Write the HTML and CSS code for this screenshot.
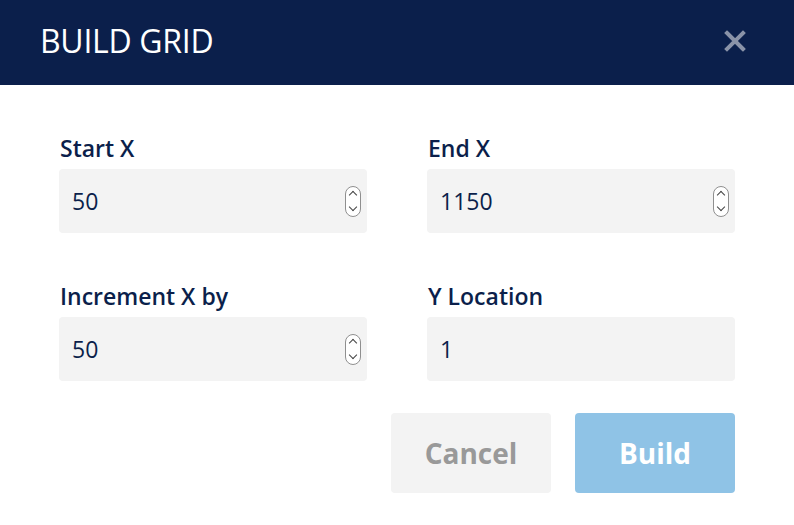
FILE: index.html
```html
<!DOCTYPE html>
<html lang="en">
<head>
<meta charset="UTF-8">
<meta name="viewport" content="width=device-width, initial-scale=1.0">
<title>Build Grid</title>
<link rel="stylesheet" href="styles.css">
</head>
<body>
<div class="modal">
  <header class="modal-header">
    <h1>BUILD GRID</h1>
    <button class="close" aria-label="Close">
      <svg width="22" height="22" viewBox="0 0 22 22"><path d="M3 3 L19 19 M19 3 L3 19" stroke="#8a93a8" stroke-width="4" stroke-linecap="square"/></svg>
    </button>
  </header>
  <div class="modal-body">
    <div class="fields">
      <div class="field">
        <label>Start X</label>
        <div class="input"><span>50</span><span class="spin"><i class="up"></i><i class="down"></i></span></div>
      </div>
      <div class="field">
        <label>End X</label>
        <div class="input"><span>1150</span><span class="spin"><i class="up"></i><i class="down"></i></span></div>
      </div>
      <div class="field">
        <label>Increment X by</label>
        <div class="input"><span>50</span><span class="spin"><i class="up"></i><i class="down"></i></span></div>
      </div>
      <div class="field">
        <label>Y Location</label>
        <div class="input"><span>1</span></div>
      </div>
    </div>
    <div class="actions">
      <button class="btn cancel">Cancel</button>
      <button class="btn build">Build</button>
    </div>
  </div>
</div>
</body>
</html>
```

FILE: styles.css
```css
body {margin: 0; font-family: "Open Sans", sans-serif; background: #fff;}
.modal {width: 794px; height: 525px; background: #fff;}

.modal-header {
  height: 85px;
  background-color: #0b1f4b;
  display: flex;
  align-items: center;
  justify-content: space-between;
  padding: 0 48px 4px 40px;
  box-sizing: border-box;
}
.modal-header h1 {
  margin: 0;
  color: #fff;
  font-weight: 400;
  font-size: 32px;
  letter-spacing: -0.3px;
}
.close {background: none; border: none; padding: 0; display: flex; cursor: pointer;}

.modal-body {padding: 48px 59px 0 59px;}
.fields {
  display: grid;
  grid-template-columns: 308px 308px;
  column-gap: 60px;
  row-gap: 48px;
}
.field label {
  display: block;
  color: #0b1f4b;
  font-weight: 600;
  font-size: 23px;
  line-height: 30px;
  margin: 0 0 6px 1px;
}
.input {
  height: 64px;
  background: #f3f3f3;
  border-radius: 4px;
  display: flex;
  align-items: center;
  justify-content: space-between;
  padding: 0 6px 0 13px;
  box-sizing: border-box;
  color: #0b1f4b;
  font-size: 23px;
}
.spin {
  width: 14px;
  height: 29px;
  border: 1px solid #8f8f8f;
  border-radius: 8px;
  background: #fff;
  display: flex;
  flex-direction: column;
  align-items: center;
  justify-content: center;
  gap: 6px;
}
.spin i {
  width: 5px;
  height: 5px;
  border-left: 1.5px solid #444;
  border-top: 1.5px solid #444;
  display: block;
}
.spin .up {transform: rotate(45deg); margin-top: 3px;}
.spin .down {transform: rotate(-135deg); margin-bottom: 3px;}

.actions {
  display: flex;
  justify-content: flex-end;
  gap: 24px;
  margin-top: 32px;
}
.btn {
  width: 160px;
  height: 80px;
  border: none;
  border-radius: 4px;
  font-family: "Open Sans", sans-serif;
  font-weight: 700;
  font-size: 28px;
}
.cancel {background: #f3f3f3; color: #999;}
.build {background: #8fc3e6; color: #fff;}
```
